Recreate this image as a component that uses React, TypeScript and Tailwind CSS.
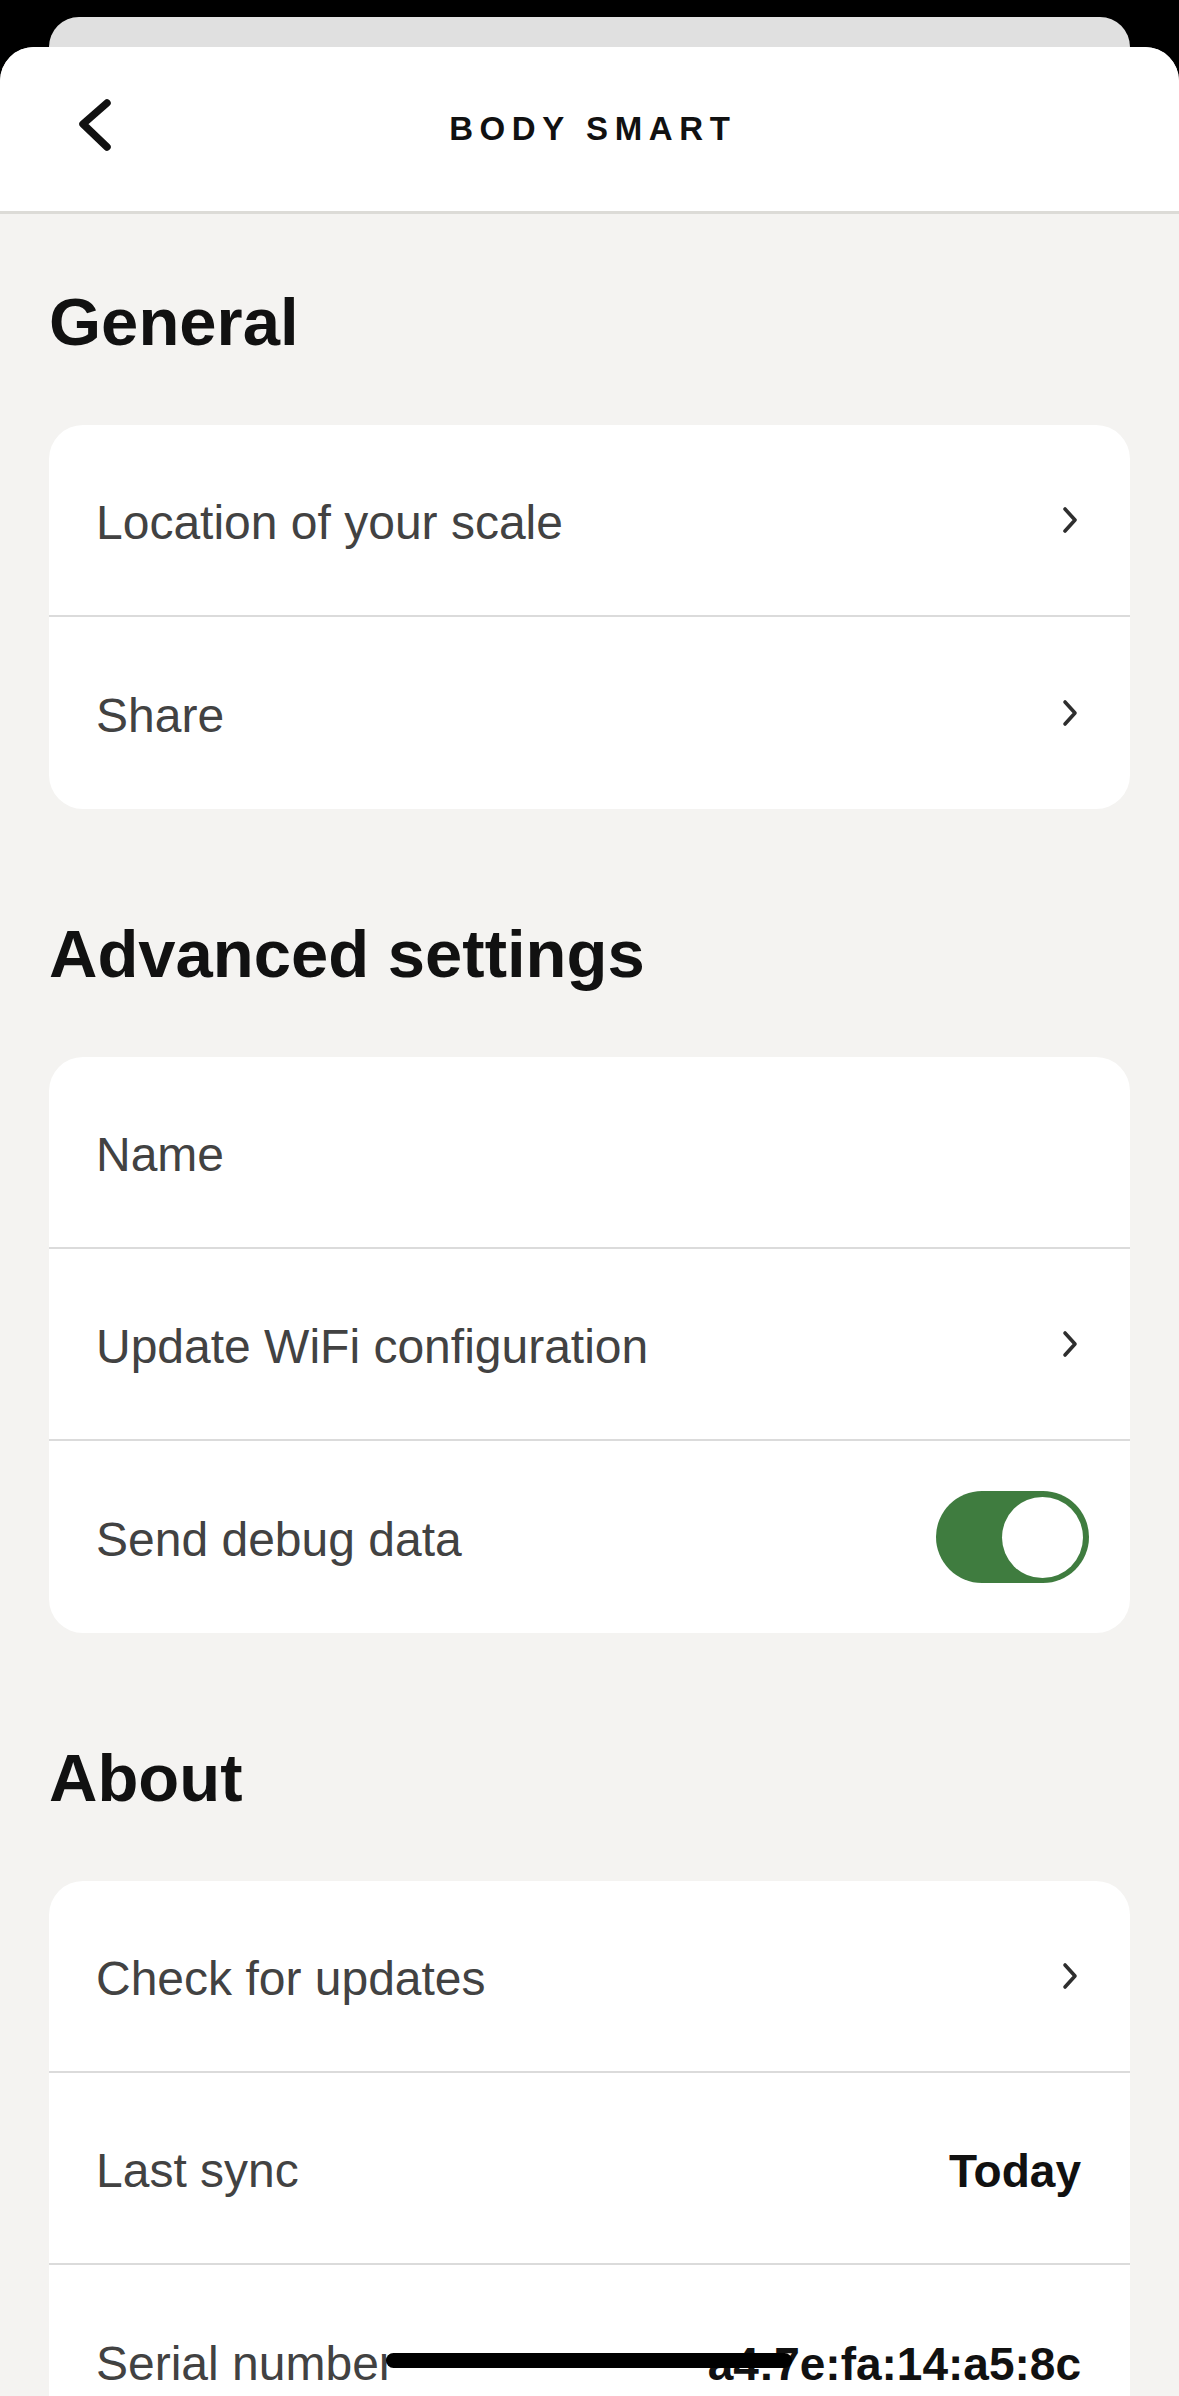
import { ReactNode } from 'react';

function Chevron() {
  return (
    <svg width="22" height="28" viewBox="0 0 22 28" fill="none" className="shrink-0">
      <polyline points="6,3 16,14 6,25" stroke="#2e2e2e" strokeWidth="3.6" strokeLinecap="round" strokeLinejoin="round" />
    </svg>
  );
}

function Toggle() {
  return (
    <div className="w-[153px] h-[92px] rounded-full bg-[#3f7c3f] flex items-center justify-end pr-[6px]">
      <div className="w-[81px] h-[81px] rounded-full bg-white" />
    </div>
  );
}

function Row({ label, right, last }: { label: string; right?: ReactNode; last?: boolean }) {
  return (
    <div className={'h-[192px] flex items-center justify-between pl-[47px] pr-[49px] ' + (last ? '' : 'border-b-2 border-[#dbdbdb]')}>
      <span className="text-[48px] text-[#424242] pt-[6px]">{label}</span>
      {right}
    </div>
  );
}

function Value({ children }: { children: string }) {
  return <span className="text-[46px] font-bold text-[#111] pt-[6px]">{children}</span>;
}

function Section({ title, first, children }: { title: string; first?: boolean; children: ReactNode }) {
  return (
    <section className={first ? 'mt-[68px]' : 'mt-[105px]'}>
      <h2 className="text-[67px] leading-[80px] font-bold text-[#111] mb-[63px]">{title}</h2>
      <div className="bg-white rounded-[34px] overflow-hidden">{children}</div>
    </section>
  );
}

export default function App() {
  return (
    <div className="w-[1179px] h-[2396px] overflow-hidden bg-black relative font-['Liberation_Sans',Arial,sans-serif]">
      <div className="h-[47px] pt-[17px] px-[49px]">
        <div className="h-[30px] rounded-t-[32px] bg-[#e0e0e0]" />
      </div>
      <div className="rounded-t-[34px] bg-[#f4f3f1] h-[2349px] overflow-hidden">
        <header className="h-[167px] bg-white border-b-[3px] border-[#dcdbd7] flex items-center justify-center relative">
          <svg width="44" height="56" viewBox="0 0 44 56" fill="none" className="absolute left-[72px] top-[50px]">
            <polyline points="35,6 11,27 35,50" stroke="#111" strokeWidth="7.5" strokeLinecap="round" strokeLinejoin="round" />
          </svg>
          <h1 className="text-[33px] font-bold tracking-[0.2em] pl-[0.2em] text-[#111]">BODY SMART</h1>
        </header>

        <main className="px-[49px]">
          <Section title="General" first>
            <Row label="Location of your scale" right={<Chevron />} />
            <Row label="Share" right={<Chevron />} last />
          </Section>

          <Section title="Advanced settings">
            <Row label="Name" />
            <Row label="Update WiFi configuration" right={<Chevron />} />
            <Row label="Send debug data" right={<div className="-mr-[8px]"><Toggle /></div>} last />
          </Section>

          <Section title="About">
            <Row label="Check for updates" right={<Chevron />} />
            <Row label="Last sync" right={<Value>Today</Value>} />
            <Row label="Serial number" right={<Value>a4:7e:fa:14:a5:8c</Value>} last />
          </Section>
        </main>
      </div>
      <div className="absolute left-[386px] top-[2353px] w-[406px] h-[15px] rounded-full bg-black" />
    </div>
  );
}
